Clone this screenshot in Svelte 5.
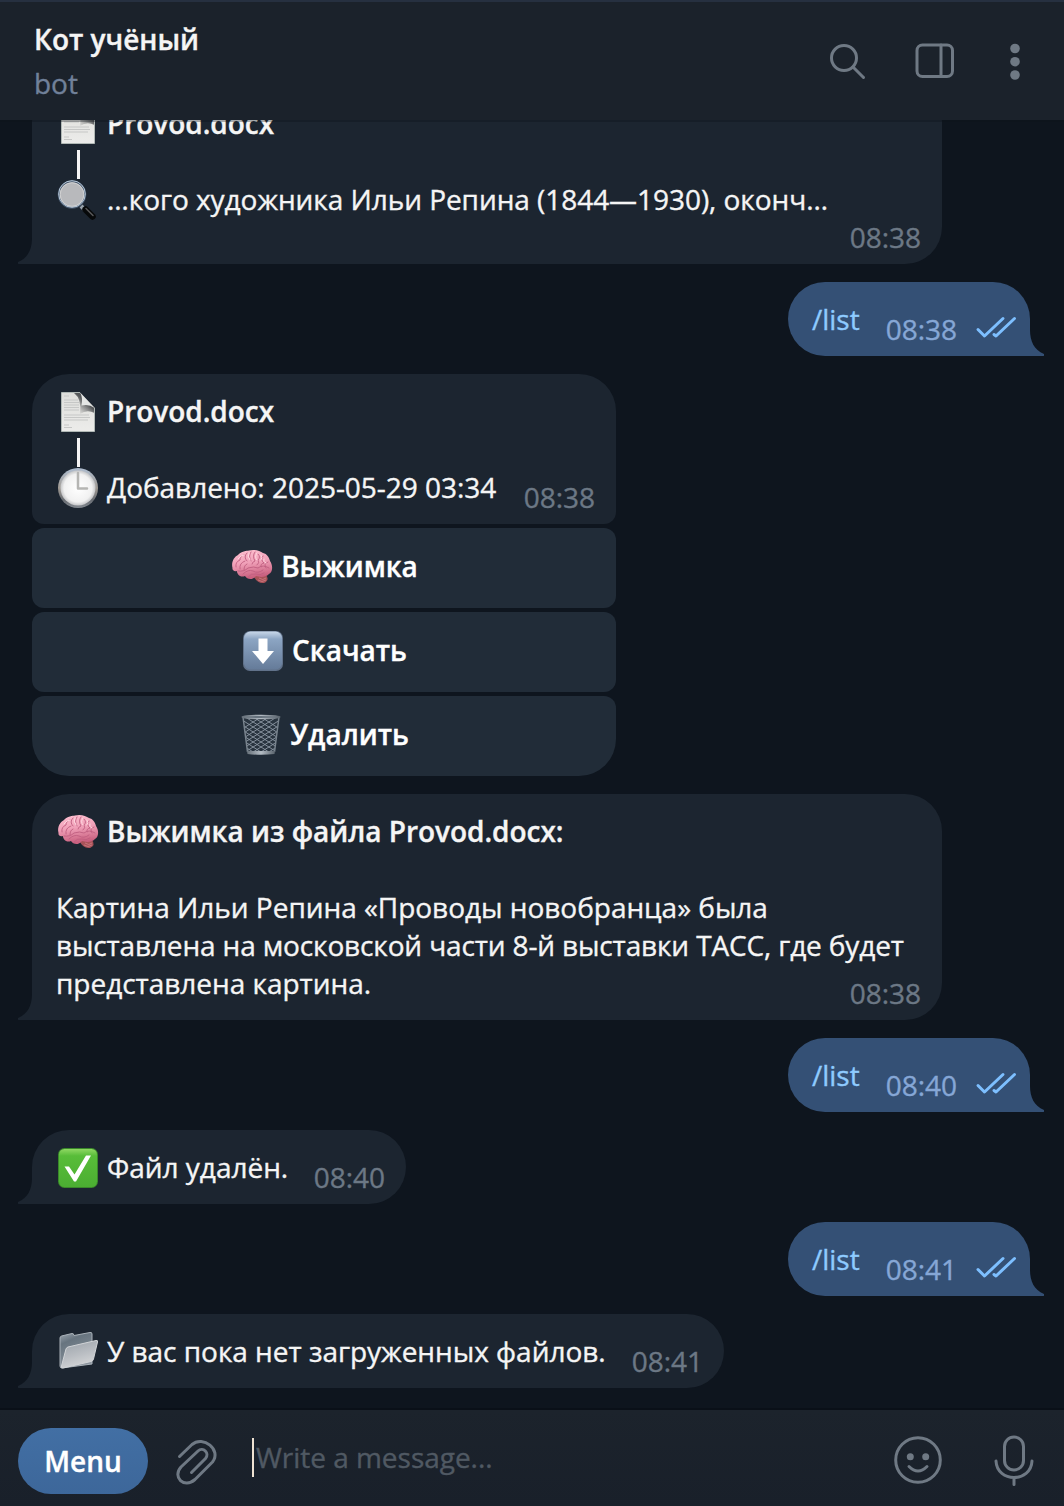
<script>
  const buttons = [
    { icon: 'brain', label: 'Выжимка' },
    { icon: 'download', label: 'Скачать' },
    { icon: 'trash', label: 'Удалить' }
  ];
  const meshRows = [0, 1, 2, 3, 4, 5, 6, 7, 8, 9];
</script>

{#snippet tail()}
  <svg class="tail" viewBox="0 0 16 26" aria-hidden="true"><path d="M14 0C14 11 10 20 0 24V25.500Q0 26 1 26H16V0Z" /></svg>
{/snippet}

{#snippet emoji(name)}
  <svg class="emoji" viewBox="0 0 44 44" aria-hidden="true">
    {#if name === 'page'}
      <defs>
        <linearGradient id="paper" x2="0" y2="1"><stop stop-color="#dededb" /><stop offset="1" stop-color="#ececea" /></linearGradient>
        <linearGradient id="foldshade" x1="0" y1="1" x2=".9" y2="0"><stop offset=".1" stop-color="#777" stop-opacity="0" /><stop offset=".6" stop-color="#3c3f42" stop-opacity=".85" /></linearGradient>
      </defs>
      <path d="M5.500 2.500H24L38.500 17.500V41.500H5.500Z" fill="url(#paper)" />
      <path d="M8 6h5M8 10h14M8 12.500h15M8 15h15M8 17.500h15M8 20h15M8 25h25M8 27.500h26M8 30h24M8 35h5M8 37.500h8" stroke="#c6c7c6" stroke-width="1" />
      <path d="M18 3H24L38.500 17.500V23Q31 19 24 24Q26 9 18 3Z" fill="url(#foldshade)" />
      <path d="M24.500 3Q27 9 25.500 15.500Q33 13.500 38.500 18Z" fill="#e4e6e5" />
      <path d="M24 2.500H5.500V41.500H38.500V18" fill="none" stroke="#b0b8b5" />
    {:else if name === 'search'}
      <path d="M25 28l4 4" stroke="#9aa4ad" stroke-width="4" />
      <path d="M29.500 31.500l7 7" stroke="#07090a" stroke-width="6.500" stroke-linecap="round" />
      <path d="M30 30.500l7 7" stroke="#59595a" stroke-width="1.500" stroke-linecap="round" />
      <circle cx="16" cy="16.500" r="13.300" fill="#b6b7ba" stroke="#45566a" stroke-width="2" />
      <circle cx="16" cy="16" r="13.300" fill="none" stroke="#b7c8d9" stroke-width="1" />
      <circle cx="16" cy="16.500" r="11.800" fill="#b8b9bc" stroke="#ddd" stroke-width=".7" />
    {:else if name === 'clock'}
      <defs>
        <linearGradient id="rim" x2="0" y2="1"><stop stop-color="#aebdd0" /><stop offset=".5" stop-color="#a19b94" /><stop offset=".8" stop-color="#686c72" /><stop offset="1" stop-color="#858b92" /></linearGradient>
        <radialGradient id="dial"><stop stop-color="#fff" /><stop offset=".8" stop-color="#f1f1f1" /><stop offset="1" stop-color="#c5c6c8" /></radialGradient>
      </defs>
      <circle cx="22" cy="22" r="20" fill="url(#rim)" />
      <circle cx="22" cy="22" r="17.500" fill="url(#dial)" />
      <path d="M22 7V22.500H31" fill="none" stroke="#b5b5b3" stroke-width="2.500" stroke-linecap="round" stroke-linejoin="round" />
    {:else if name === 'brain'}
      <defs><linearGradient id="pink" x2=".2" y2="1"><stop stop-color="#ffc2d2" /><stop offset=".5" stop-color="#f0a0b8" /><stop offset="1" stop-color="#c9607f" /></linearGradient></defs>
      <path d="M23 30Q27 39 34 38Q40 35 36 30Z" fill="#a95259" />
      <path d="M29 33q4 3 7 0M28 35q4 3 8 0" fill="none" stroke="#d2848a" stroke-width=".7" />
      <path d="M2.500 23C1 17 4 12 8 10C11 6 17 6 19 5.500C25 4 30 6 33 8C37 9 39 12 40 16C43 20 43 27 39 29C35 33 29 32 26 31C22 36 17 34 15 31C10 33 7 29 7 26C4 27 2 25 2.500 23Z" fill="url(#pink)" />
      <path d="M6 22q-1-5 4-7q0-4 4-5M10 24q-1-6 5-8M14 25q0-5 3-6M17 8q-4 4 0 8M21 7q-3 4 0 9M25 7q-3 4 0 9q-3 1-3 3M28 9q3 3 0 6q2 3-1 5M33 11q-3 4 1 7q-4 1-3 4M38 17q-5 2-2 6M8 26q6 1 10-3q6-2 10 0q5-4 11 0M13 29q5-5 10-3q5 3 10-1M18 32q3-4 8-3q4 2 8-1" fill="none" stroke="#bf5f80" stroke-width=".9" stroke-linecap="round" />
      <path d="M8 14q3-4 6-4M19 8q-2 4 1 7M27 8q-3 4 0 7M31 10q2 3 0 5M34 14q-1 3 2 4" fill="none" stroke="#ffd9e1" stroke-width="1" stroke-linecap="round" />
    {:else if name === 'download'}
      <defs><linearGradient id="bluekey" x2="0" y2="1"><stop stop-color="#c9d8e9" /><stop offset=".2" stop-color="#8ca5c3" /><stop offset="1" stop-color="#657b99" /></linearGradient></defs>
      <rect x="2" y="2" width="40" height="40" rx="7" fill="#61728a" />
      <rect x="3" y="2.500" width="38" height="38" rx="6.500" fill="url(#bluekey)" />
      <path d="M17.500 9.500h9V22h6.500L22 35L11 22h6.500Z" fill="#fff" />
    {:else if name === 'trash'}
      <defs><linearGradient id="steel"><stop stop-color="#667079" /><stop offset=".5" stop-color="#b4bcc4" /><stop offset="1" stop-color="#59636c" /></linearGradient></defs>
      <clipPath id="basket"><path d="M4 4H40L35.500 39H8.500Z" /></clipPath>
      <path d="M4 4H40L35.500 40H8.500Z" fill="#29343f" />
      <g clip-path="url(#basket)" fill="none" stroke="#8d99a5" stroke-width=".9">
        {#each meshRows as row}
          <path d="M0 {row * 5 - 10}L44 {row * 5 + 18}M0 {row * 5 + 18}L44 {row * 5 - 10}" />
        {/each}
      </g>
      <path d="M4 4L8.500 39M40 4L35.500 39" fill="none" stroke="#78838d" stroke-width="1.500" />
      <ellipse cx="22" cy="4" rx="19" ry="1.700" fill="#66727d" stroke="url(#steel)" stroke-width="1.300" />
      <path d="M8 38h28l-.5 3Q22 42.500 8.500 41Z" fill="url(#steel)" />
    {:else if name === 'check'}
      <defs><linearGradient id="green" x2="0" y2="1"><stop stop-color="#8fd863" /><stop offset=".18" stop-color="#58bd39" /><stop offset="1" stop-color="#4bae32" /></linearGradient></defs>
      <rect x="2" y="2" width="40" height="40" rx="6.500" fill="#39882a" />
      <rect x="3" y="3" width="38" height="38" rx="5.500" fill="url(#green)" />
      <path d="M8.500 20.500H13L18.500 28.500L30 9.500H35L20 35.500H18Z" fill="#fff" />
    {:else}
      <defs>
        <linearGradient id="folderback" x2=".4" y2="1"><stop stop-color="#a0a9b2" /><stop offset=".3" stop-color="#67747f" /><stop offset="1" stop-color="#8b949d" /></linearGradient>
        <linearGradient id="folderfront" x2=".4" y2="1"><stop stop-color="#989fa7" /><stop offset=".6" stop-color="#b9bdc2" /><stop offset="1" stop-color="#d2d4d6" /></linearGradient>
      </defs>
      <path d="M4 8Q4 6.500 5.500 6L16 3.500Q17.500 3 18 5.500L34 2.500Q36 2 36 4V34L6 38Q4 38 4 36Z" fill="url(#folderback)" stroke="#aab2b9" />
      <path d="M12 17L40 10.500Q42 10 41.500 12L37.500 29Q37 31 35 31.500L7 38Q4.500 38.500 5.500 36L10 19Q10.500 17.500 12 17Z" fill="url(#folderfront)" stroke="#d1d4d7" />
    {/if}
  </svg>
{/snippet}

{#snippet sent(time)}
  <div class="bubble sent">
    <span class="command">/list</span>
    <time>{time}</time>
    <svg class="ticks" viewBox="0 0 40 22" aria-hidden="true"><path d="M2 12.500L8.500 19L27 1.500M18 17.500L20 19L38.500 1.500" /></svg>
    {@render tail()}
  </div>
{/snippet}

<div class="app">
  <header>
    <div class="identity"><strong>Кот учёный</strong><span>bot</span></div>
    <div class="tools">
      <svg class="find" viewBox="0 0 38 38"><circle cx="15" cy="15" r="12.500" /><path d="M24 24L34.500 34.500" /></svg>
      <svg class="panel" viewBox="0 0 40 36"><rect x="2" y="2" width="35.500" height="31.500" rx="5.500" /><path d="M26 2V33" /></svg>
      <svg class="more" viewBox="0 0 10 38"><circle cx="5" cy="5.500" r="4.800" /><circle cx="5" cy="18.700" r="4.800" /><circle cx="5" cy="32" r="4.800" /></svg>
    </div>
  </header>

  <main>
    <article class="bubble wide found">
      <p>{@render emoji('page')}<b>Provod.docx</b></p>
      <p class="connector"><i></i></p>
      <p class="excerpt">{@render emoji('search')}…кого художника Ильи Репина (1844—1930), оконч…</p>
      <time>08:38</time>
      {@render tail()}
    </article>

    {@render sent('08:38')}

    <section class="file-card">
      <article class="bubble file">
        <p>{@render emoji('page')}<b>Provod.docx</b></p>
        <p class="connector"><i></i></p>
        <p>{@render emoji('clock')}Добавлено: 2025-05-29 03:34</p>
        <time>08:38</time>
      </article>
      {#each buttons as button}
        <button>{@render emoji(button.icon)}<span>{button.label}</span></button>
      {/each}
    </section>

    <article class="bubble wide">
      <p>{@render emoji('brain')}<b>Выжимка из файла Provod.docx:</b></p>
      <p class="blank"></p>
      <p>Картина Ильи Репина «Проводы новобранца» была</p>
      <p class="dense">выставлена на московской части 8-й выставки ТАСС, где будет</p>
      <p>представлена картина.</p>
      <time>08:38</time>
      {@render tail()}
    </article>

    {@render sent('08:40')}

    <article class="bubble deleted">
      <p>{@render emoji('check')}Файл удалён.</p>
      <time>08:40</time>
      {@render tail()}
    </article>

    {@render sent('08:41')}

    <article class="bubble empty">
      <p>{@render emoji('folder')}У вас пока нет загруженных файлов.</p>
      <time>08:41</time>
      {@render tail()}
    </article>
  </main>

  <footer>
    <button class="menu">Menu</button>
    <svg class="clip" viewBox="0 0 42 48"><path d="M3.500 18.500L16 6.500C27-3 46 12 36.500 24L19 41.500C8 51 -4 39 5 29L22 13C27 8.500 34 15 29.500 20.500L15.500 34.500" /></svg>
    <div class="input">Write a message...</div>
    <svg class="smile" viewBox="0 0 48 48"><circle cx="24" cy="24" r="22.300" /><circle class="dot" cx="16.300" cy="20.700" r="3.500" /><circle class="dot" cx="31.700" cy="20.700" r="3.500" /><path d="M15 30.500Q24 39.500 33 30.500" /></svg>
    <svg class="mic" viewBox="0 0 40 52"><rect x="10.500" y="2" width="19" height="33" rx="9.500" /><path d="M2 26C3 48 37 48 38 26M20 43V49.500" /></svg>
  </footer>
</div>

<style>
  :global(body) { background: #0e151e; }
  * { box-sizing: border-box; }
  .app {
    display: flex;
    flex-direction: column;
    height: 1506px;
    overflow: hidden;
    background: #0e151e;
    color: #f5f5f5;
    font: 28px/38px "Open Sans", "Noto Sans", sans-serif;
    letter-spacing: -.025px;
    -webkit-text-stroke: .35px currentColor;
  }
  svg { display: block; flex: none; overflow: visible; }
  header {
    display: flex;
    justify-content: space-between;
    flex: none;
    height: 120px;
    padding: 18px 44px 0 34px;
    border-top: 2px solid #263040;
    background: #1b222b;
    z-index: 1;
    box-shadow: 0 2px 0 #0b111855;
  }
  .identity { display: flex; flex-direction: column; gap: 6px; }
  .identity strong, b { font-weight: 600; }
  .identity span { color: #71819a; }
  .tools { display: flex; align-items: flex-start; padding-top: 23px; }
  .tools svg, footer svg { fill: none; stroke: #6f7984; stroke-width: 3; stroke-linecap: round; stroke-linejoin: round; }
  .find { width: 38px; height: 38px; margin-right: 48px; }
  .panel { width: 40px; height: 36px; margin-right: 55px; }
  .tools .more { width: 10px; height: 38px; fill: #6f7984; stroke: none; }

  main {
    display: flex;
    flex-direction: column;
    justify-content: flex-end;
    align-items: flex-start;
    gap: 18px;
    height: 1290px;
    padding: 0 34px 22px 32px;
    overflow: hidden;
  }
  .bubble {
    position: relative;
    display: flex;
    flex-direction: column;
    flex: none;
    padding: 18px 21px 19px 24px;
    border-radius: 37px 37px 37px 0;
    background: #1c2530;
  }
  p { display: flex; height: 38px; margin: 0; white-space: nowrap; }
  .excerpt { letter-spacing: -.05px; }
  .dense { letter-spacing: -.14px; }
  .emoji { width: 44px; height: 44px; margin: -2px 7px 0 0; }
  .connector { padding: 8px 0 0 21px; }
  .connector i { width: 2.5px; height: 29px; background: #f5f5f5; }
  .bubble time { align-self: flex-end; margin: -28px 0 -11px; color: #6c7885; }
  .bubble.found time { margin-top: 0; }
  .wide { width: 910px; }
  .deleted { width: 374px; }
  .empty { width: 692px; }
  .tail { position: absolute; left: -14px; bottom: 0; width: 16px; height: 26px; fill: #1c2530; }

  .bubble.sent {
    flex-direction: row;
    align-self: flex-end;
    width: 242px;
    height: 74px;
    padding: 18px 14px 18px 24px;
    border-radius: 37px 37px 0 37px;
    background: #345075;
  }
  .command { color: #8ecbff; }
  .bubble.sent time { align-self: flex-start; margin: 10px 0 0 auto; color: #86a7d6; }
  .ticks { width: 40px; height: 22px; margin: 17px 0 0 19px; fill: none; stroke: #7dbfff; stroke-width: 3; stroke-linecap: round; stroke-linejoin: round; }
  .sent .tail { left: auto; right: -14px; transform: scaleX(-1); fill: #345075; }

  .file-card { display: flex; flex-direction: column; gap: 4px; width: 584px; }
  .bubble.file { border-radius: 37px 37px 12px 12px; }
  button { border: 0; font: inherit; font-weight: 600; letter-spacing: inherit; color: #fff; }
  .file-card button {
    display: flex;
    justify-content: center;
    height: 80px;
    padding: 19px 0 0;
    border-radius: 12px;
    background: #212c38;
  }
  .file-card button:last-child { border-radius: 12px 12px 37px 37px; }

  footer {
    display: flex;
    align-items: flex-start;
    height: 96px;
    padding: 18px 30px 0 18px;
    background: linear-gradient(#1c232c, #19202a);
    box-shadow: 0 -2px 0 #0a1018;
  }
  .menu { width: 130px; height: 66px; padding: 0; border-radius: 33px; background: linear-gradient(#426fa4, #3d679a); }
  .clip { width: 42px; height: 48px; margin: 10px 0 0 28px; }
  .input { height: 39px; margin: 10px auto 0 34px; padding-left: 2px; border-left: 2px solid #eee2d2; color: #505963; }
  .smile { width: 48px; height: 48px; margin: 8px 52px 0 0; }
  .smile .dot { fill: #6f7984; stroke: none; }
  .mic { width: 40px; height: 52px; margin-top: 7px; }
</style>
